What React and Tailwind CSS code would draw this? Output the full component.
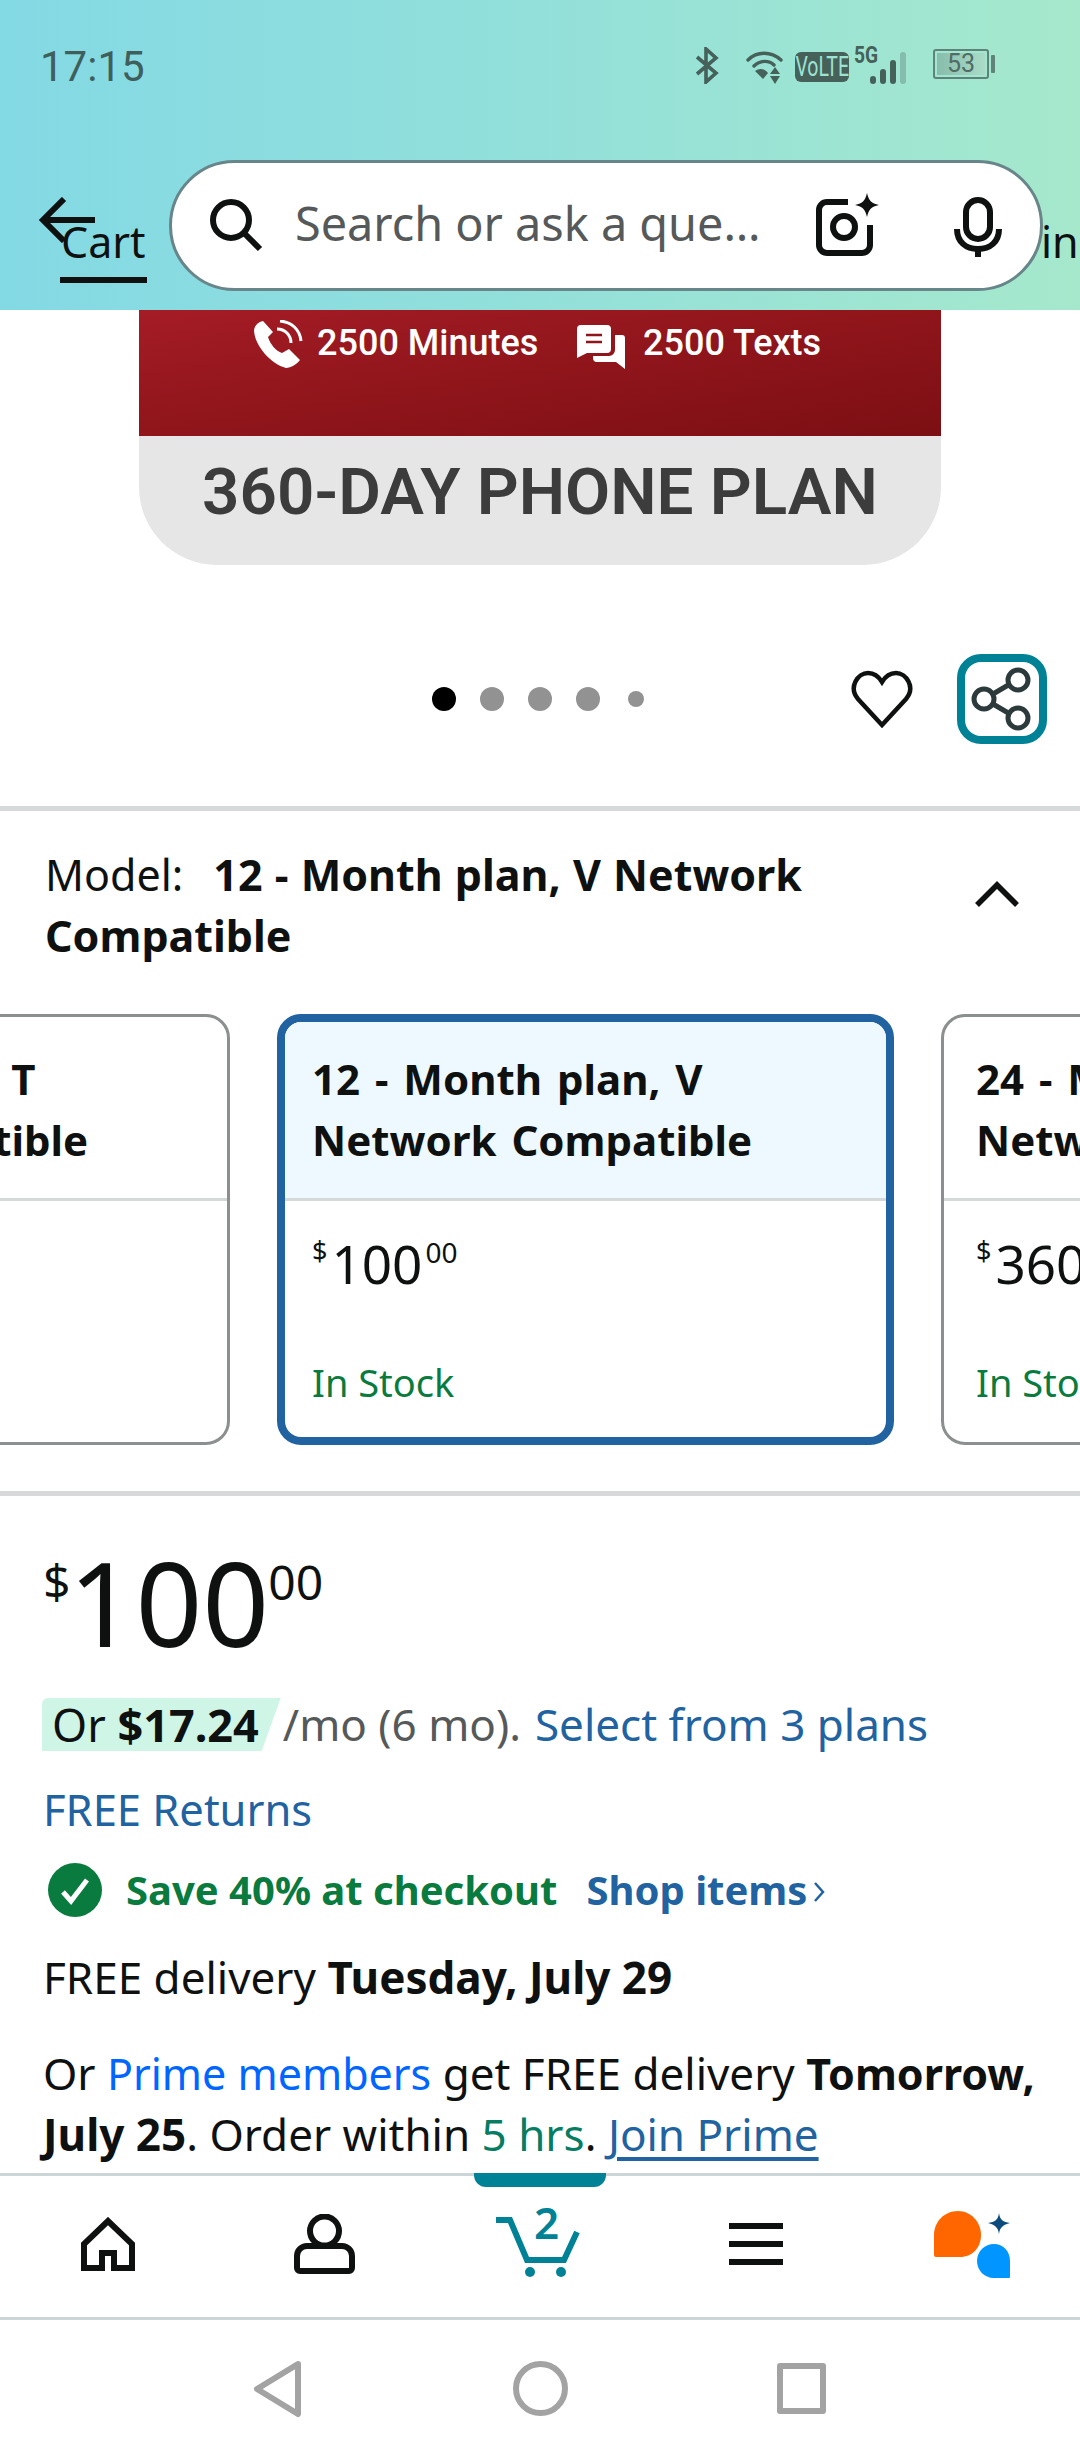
import React from "react";

const Price = ({ whole }) => (
  <div className="flex items-start text-[#0f1111] leading-none">
    <span className="text-[27px] mt-[3px] mr-[4px]">$</span>
    <span className="text-[53px] leading-[60px]">{whole}</span>
    <span className="text-[28px] ml-[3px] mt-[4px]">00</span>
  </div>
);

const Card = ({ selected, title, price }) => (
  <div
    className={
      "w-[617px] h-[431px] shrink-0 rounded-[24px] flex flex-col overflow-hidden " +
      (selected ? "border-[8px] border-[#2162a1]" : "border-[3px] border-[#8c8f8f]")
    }
  >
    <div className={"border-b-[3px] border-[#d5d9d9] " + (selected ? "h-[179px] pl-[27px] pt-[26px] bg-[#edf8ff]" : "h-[184px] pl-[32px] pt-[31px]")}>
      <p className="text-[42px] leading-[61px] [word-spacing:4px] font-bold text-[#0f1111] whitespace-pre">{title}</p>
    </div>
    <div className={"pt-[33px] flex flex-col flex-1 justify-between " + (selected ? "pl-[27px] pb-[30px]" : "pl-[32px] pb-[35px]")}>
      <Price whole={price} />
      <p className="text-[38px] leading-[50px] text-[#0a7b3e]">In Stock</p>
    </div>
  </div>
);

export default function App() {
  return (
    <div className="w-[1080px] h-[2460px] bg-white overflow-hidden flex flex-col font-['Noto_Sans',sans-serif]">
      {/* Header */}
      <header className="h-[310px] shrink-0 bg-gradient-to-r from-[#83d9e4] via-[#93e0da] to-[#a5e8cc] flex flex-col">
        <div className="h-[160px] relative">
          <span className="absolute left-[40px] top-[42px] text-[42px] leading-[50px] text-[#3f5f5c] font-['Roboto',sans-serif]">17:15</span>
          <div className="absolute left-[695px] top-[45px] w-[310px] h-[42px] text-[#46605a]">
            <svg className="absolute left-0 top-[2px]" width="24" height="37" viewBox="0 0 24 37" fill="none" stroke="currentColor" strokeWidth="3.6" strokeLinejoin="miter">
              <path d="M2 10 21 26 11 35V2l10 9L2 27" />
            </svg>
            <svg className="absolute left-[51px] top-[5px]" width="37" height="34" viewBox="0 0 37 34" fill="none" stroke="currentColor" strokeWidth="3.4" strokeLinecap="round">
              <path d="M2 10C11 1 25 1 35 10" />
              <path d="M8 16C14 10 23 10 28 15" />
              <path d="M9 21 17 29 22 23C18 18 13 18 9 21Z" fill="currentColor" stroke="none" />
              <path d="M29 17l5 7H24ZM24 26h10l-5 8Z" fill="currentColor" stroke="none" />
            </svg>
            <div className="absolute left-[100px] top-[7px] w-[54px] h-[30px] bg-[#46605a] rounded-[6px] flex items-center justify-center overflow-hidden">
              <span className="block text-[#9de3d2] text-[27px] leading-[30px] font-['Roboto',sans-serif] scale-x-[0.72] whitespace-nowrap">VoLTE</span>
            </div>
            <span className="absolute left-[156px] top-[-4px] text-[24px] leading-[28px] font-bold font-['Roboto',sans-serif] scale-x-[0.8]">5G</span>
            <div className="absolute left-[175px] top-[7px] h-[32px] flex items-end gap-[4px]">
              <i className="block w-[6px] h-[8px] bg-[#46605a] rounded-[3px]" />
              <i className="block w-[6px] h-[15px] bg-[#46605a] rounded-[3px]" />
              <i className="block w-[6px] h-[24px] bg-[#46605a] rounded-[3px]" />
              <i className="block w-[6px] h-[32px] bg-[#46605a]/30 rounded-[3px]" />
            </div>
            <div className="absolute left-[238px] top-[4px] w-[56px] h-[30px] border-[2px] border-[#5f8279] rounded-[3px] p-[2px] flex">
              <div className="flex-1 bg-gradient-to-r from-[#88bcab] to-[#a9dcc8] text-[#4f6c66] text-[25px] leading-[22px] text-center font-['Roboto',sans-serif]">53</div>
            </div>
            <i className="absolute left-[296px] top-[10px] w-[4px] h-[18px] bg-[#5f8279] rounded-[1px] block" />
          </div>
        </div>
        <div className="flex items-start relative">
          <svg className="absolute left-[38px] top-[37px]" width="58" height="46" viewBox="0 0 58 46" fill="none" stroke="#0f1111" strokeWidth="6">
            <path d="M57 23H5M26 2 5 23l21 21" />
          </svg>
          <div className="ml-[60px] w-[109px] mt-[56px] shrink-0">
            <span className="block w-[87px] text-[43px] leading-[52px] text-[#0f1111] border-b-[6px] border-[#0f1111] pb-[9px] pl-[1px]">Cart</span>
          </div>
          <div className="w-[874px] h-[131px] shrink-0 bg-white rounded-[66px] border-[3px] border-[#68858a] flex items-center relative">
            <svg className="ml-[38px] shrink-0" width="54" height="54" viewBox="0 0 54 54" fill="none" stroke="#0f1111" strokeWidth="6">
              <circle cx="21" cy="21" r="18" />
              <path d="m34 34 16 16" />
            </svg>
            <span className="ml-[31px] mb-[5px] text-[46.8px] text-[#565959] whitespace-nowrap leading-none">Search or ask a que…</span>
            <svg className="absolute left-[644px] top-[30px]" width="64" height="64" viewBox="0 0 64 64" fill="none" stroke="#0f1111" strokeWidth="6">
              <path d="M32 9H11a8 8 0 0 0-8 8v35a8 8 0 0 0 8 8h35a8 8 0 0 0 8-8V32" />
              <circle cx="28" cy="34" r="11" />
              <path d="M51 0c2 8 4 10 12 12-8 2-10 4-12 12-2-8-4-10-12-12 8-2 10-4 12-12Z" fill="#0f1111" stroke="none" />
            </svg>
            <svg className="absolute left-[782px] top-[34px]" width="48" height="60" viewBox="0 0 48 60" fill="none" stroke="#0f1111" strokeWidth="6">
              <rect x="12" y="3" width="24" height="39" rx="12" />
              <path d="M3 32c0 13 9 20 21 20s21-7 21-20" />
              <path d="M24 52v8" />
            </svg>
          </div>
          <span className="text-[43px] leading-[52px] mt-[56px] -ml-[2px] text-[#0f1111] whitespace-nowrap">in</span>
        </div>
      </header>

      {/* Product image */}
      <section className="h-[496px] shrink-0 flex flex-col">
        <div className="w-[802px] ml-[139px] h-[255px] flex flex-col font-['Roboto',sans-serif] rounded-b-[78px] overflow-hidden">
          <div className="h-[126px] bg-gradient-to-br from-[#a51c26] via-[#8f151b] to-[#7c0f13] flex items-start pt-[10px] pl-[114px] text-white text-[36px] font-medium leading-[42px]">
            <svg width="50" height="50" viewBox="0 0 50 50" fill="#fff">
              <path d="M10 1C5 2 1 6 1 11c1 15 17 33 32 37 5 0 11-4 14-8L36 29l-7 4c-6-2-12-9-14-16l5-5Z" />
              <path d="M24 9c8 0 14 6 14 14" fill="none" stroke="#fff" strokeWidth="3" />
              <path d="M27 1c12 1 20 9 21 20" fill="none" stroke="#fff" strokeWidth="3" />
            </svg>
            <span className="ml-[14px] mt-[2px] w-[260px] whitespace-nowrap">2500 Minutes</span>
            <svg width="49" height="44" viewBox="0 0 49 44" className="mt-[5px]" fill="#fff">
              <path d="M4 0h26a4 4 0 0 1 4 4v20a4 4 0 0 1-4 4H10L0 33V4a4 4 0 0 1 4-4Z" />
              <path d="M9 10h16M9 17h16" stroke="#8f151b" strokeWidth="2.500" />
              <path d="M38 10h7a3 3 0 0 1 3 3v31l-9-7H20a4 4 0 0 1-4-4v-2h16a6 6 0 0 0 6-6Z" />
            </svg>
            <span className="ml-[17px] mt-[2px] whitespace-nowrap">2500 Texts</span>
          </div>
          <div className="flex-1 bg-[#e6e6e6] text-[#3c3c3c] text-[65.5px] leading-[70px] font-semibold text-center pt-[21px] whitespace-nowrap">
            360-DAY PHONE PLAN
          </div>
        </div>
        <div className="relative flex-1 flex items-center">
          <div className="flex items-center gap-[24px] ml-[432px] mt-[27px]">
            <i className="block w-[24px] h-[24px] rounded-full bg-black" />
            <i className="block w-[24px] h-[24px] rounded-full bg-[#929292]" />
            <i className="block w-[24px] h-[24px] rounded-full bg-[#929292]" />
            <i className="block w-[24px] h-[24px] rounded-full bg-[#929292]" />
            <i className="block w-[16px] h-[16px] rounded-full bg-[#929292] ml-[4px]" />
          </div>
          <svg className="absolute left-[851px] top-[105px]" width="62" height="58" viewBox="0 0 62 58" fill="none" stroke="#0f1111" strokeWidth="4.500" strokeLinejoin="miter">
            <path d="M31 55 7 29C-3 17 7 3 17 3c7 0 11 4 14 9 3-5 7-9 14-9 10 0 20 14 10 26Z" />
          </svg>
          <div className="absolute left-[957px] top-[89px] w-[90px] h-[90px] border-[8px] border-[#008296] rounded-[24px] flex items-center justify-center">
            <svg width="66" height="66" viewBox="0 0 66 66" fill="none" stroke="#2c3a3c" strokeWidth="5">
              <circle cx="49" cy="14" r="10" />
              <circle cx="15" cy="33" r="10" />
              <circle cx="49" cy="52" r="10" />
              <path d="m24 28 17-10M24 38l17 10" />
            </svg>
          </div>
        </div>
      </section>

      {/* Model selector */}
      <section className="border-t-[5px] border-b-[5px] border-[#d5d9d9] h-[690px] shrink-0">
        <div className="relative pt-[33px] pl-[45px] pr-[150px] text-[43px] leading-[61px] text-[#0f1111]">
          <p>
            Model:<span className="font-bold ml-[30px] [word-spacing:1px]">12 - Month plan, V Network Compatible</span>
          </p>
          <svg className="absolute left-[975px] top-[69px]" width="44" height="28" viewBox="0 0 44 28" fill="none" stroke="#0f1111" strokeWidth="5.500">
            <path d="M2 25 22 5l20 20" />
          </svg>
        </div>
        <div className="flex gap-[47px] -ml-[387px] mt-[48px]">
          <Card title={"12 - Month plan, T\nNetwork Compatible"} price="100" />
          <Card selected title={"12 - Month plan, V\nNetwork Compatible"} price="100" />
          <Card title={"24 - Month plan, V\nNetwork Compatible"} price="360" />
        </div>
      </section>

      {/* Buy box */}
      <section className="flex-1 min-h-0 px-[43px] text-[44px] leading-[61px] text-[#0f1111] overflow-hidden">
        <div className="flex items-start h-[130px] mt-[60px] leading-none">
          <span className="text-[48px] mt-[1px]">$</span>
          <span className="text-[117px] leading-[92px] -ml-[2px]">100</span>
          <span className="text-[48px] -ml-[1px] mt-[2px]">00</span>
        </div>
        <div className="flex items-center mt-[8px] whitespace-nowrap text-[#565959]">
          <span className="-ml-[1px] pl-[10px] pr-[22px] h-[53px] leading-[53px] text-[45px] text-[#0f1111] bg-[#cff5e7] [clip-path:polygon(0_0,100%_0,92%_100%,0_100%)] rounded-tl-[6px]">
            Or <b>$17.24</b>
          </span>
          <span className="ml-[2px]">/mo (6 mo).</span>
          <span className="text-[#2162a1] ml-[14px]">Select from 3 plans</span>
        </div>
        <p className="text-[#2162a1] text-[43.5px] mt-[24px]">FREE Returns</p>
        <div className="flex items-center mt-[19px] text-[40px] font-bold">
          <svg className="ml-[5px] mr-[24px]" width="54" height="54" viewBox="0 0 54 54">
            <circle cx="27" cy="27" r="27" fill="#0a7b3e" />
            <path d="m15 29 8 9 16-21" fill="none" stroke="#fff" strokeWidth="5" />
          </svg>
          <span className="text-[#0a7b3e]">Save 40% at checkout</span>
          <span className="text-[#2162a1] ml-[29px]">Shop items</span>
          <svg className="ml-[6px] mt-[4px]" width="12" height="22" viewBox="0 0 12 22" fill="none" stroke="#2162a1" strokeWidth="2.500">
            <path d="m2 2 8 9-8 9" />
          </svg>
        </div>
        <p className="mt-[27px]">
          FREE delivery <b>Tuesday, July 29</b>
        </p>
        <p className="mt-[35px]">
          Or <span className="text-[#0066ff] text-[43px]">Prime members</span> get FREE delivery <b className="text-[43px]">Tomorrow,</b>
          <br />
          <span>
            <b>July 25</b>. Order within <span className="text-[#067d62]">5 hrs</span>.{" "}
            <span className="text-[#2162a1] underline decoration-[4px] underline-offset-[6px]">Join Prime</span>
          </span>
        </p>
      </section>

      {/* Bottom nav */}
      <nav className="h-[147px] shrink-0 border-t-[3px] border-b-[3px] border-[#ccd5d7] relative flex items-start">
        <i className="absolute left-[474px] -top-[3px] w-[132px] h-[14px] bg-[#008296] rounded-b-[12px] block" />
        <svg className="absolute left-[81px] top-[41px]" width="54" height="54" viewBox="0 0 54 54" fill="none" stroke="#0f1111" strokeWidth="6">
          <path d="M3 51V27L27 4l24 23v24H33V36H21v15Z" />
        </svg>
        <svg className="absolute left-[294px] top-[38px]" width="61" height="60" viewBox="0 0 61 60" fill="none" stroke="#0f1111" strokeWidth="6">
          <circle cx="30.500" cy="17" r="14.500" />
          <path d="M3 54V42a10 10 0 0 1 10-10h35a10 10 0 0 1 10 10v12a3 3 0 0 1-3 3H6a3 3 0 0 1-3-3Z" />
        </svg>
        <svg className="absolute left-[496px] top-[41px]" width="84" height="60" viewBox="0 0 84 60" fill="none" stroke="#008296" strokeWidth="6">
          <path d="M0 3h14l17 40h37l13-28" />
          <circle cx="34" cy="55" r="5" fill="#008296" stroke="none" />
          <circle cx="65" cy="55" r="5" fill="#008296" stroke="none" />
        </svg>
        <span className="absolute left-[534px] top-[20px] text-[44px] leading-[52px] font-semibold text-[#008296]">2</span>
        <div className="absolute left-[729px] top-[47px] w-[54px] flex flex-col gap-[12px]">
          <i className="block h-[6px] bg-[#0f1111]" />
          <i className="block h-[6px] bg-[#0f1111]" />
          <i className="block h-[6px] bg-[#0f1111]" />
        </div>
        <svg className="absolute left-[934px] top-[35px]" width="77" height="68" viewBox="0 0 77 68">
          <path d="M24 0C10 0 0 11 0 24v20a2 2 0 0 0 2 2h24c12 0 21-9 21-22C47 11 37 0 24 0Z" fill="#ff6600" />
          <path d="M60 33c-9 0-17 7-17 17 0 9 7 17 17 17h15a1 1 0 0 0 1-1V50c0-10-7-17-16-17Z" fill="#0095ff" />
          <path d="M65 2c1 7 4 9 11 10-7 2-10 4-11 11-1-7-4-9-11-11 7-1 10-3 11-10Z" fill="#0a4a7c" />
        </svg>
      </nav>

      {/* System nav */}
      <div className="h-[140px] shrink-0 relative">
        <svg className="absolute left-[253px] top-[40px]" width="49" height="58" viewBox="0 0 49 58" fill="none" stroke="#a3a3a3" strokeWidth="6" strokeLinejoin="round">
          <path d="M45 4 4 29l41 25Z" />
        </svg>
        <svg className="absolute left-[513px] top-[40px]" width="55" height="57" viewBox="0 0 55 57" fill="none" stroke="#a3a3a3" strokeWidth="6">
          <circle cx="27.500" cy="28.500" r="24.500" />
        </svg>
        <svg className="absolute left-[777px] top-[43px]" width="49" height="51" viewBox="0 0 49 51" fill="none" stroke="#a3a3a3" strokeWidth="6" strokeLinejoin="round">
          <rect x="3" y="3" width="43" height="45" />
        </svg>
      </div>
    </div>
  );
}
